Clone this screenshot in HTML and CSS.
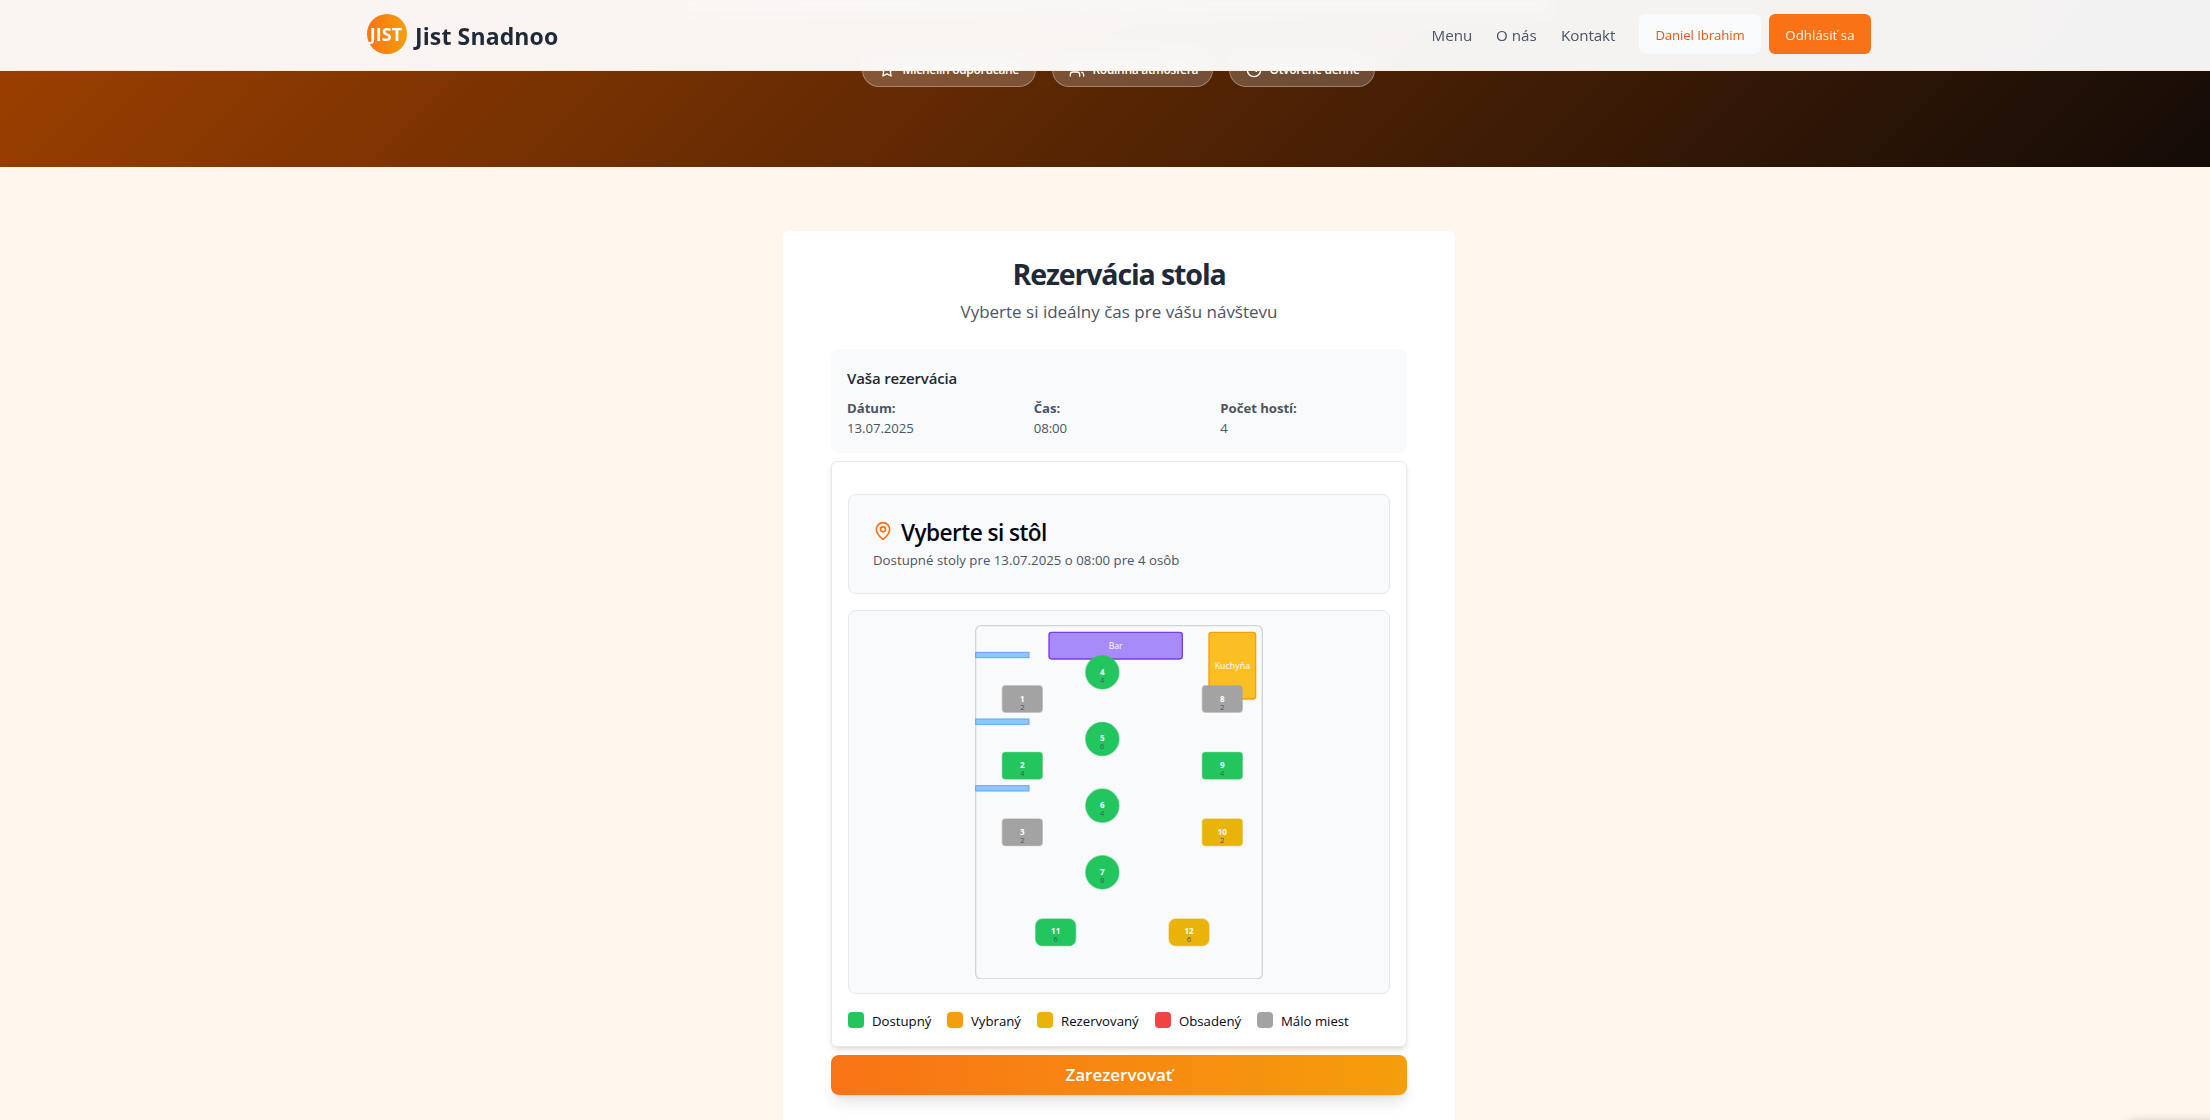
FILE: index.html
```html
<!DOCTYPE html>
<html lang="sk">
<head>
<meta charset="utf-8">
<title>Jist Snadnoo</title>
<link rel="stylesheet" href="styles.css">
</head>
<body>
<div class="page">
<header class="header">
  <div class="header-inner">
    <div class="brand"><span class="logo"><span>JIST</span></span><span class="brand-name">Jist Snadnoo</span></div>
    <nav class="nav">
      <a class="nav-menu">Menu</a><a class="nav-about">O nás</a><a class="nav-contact">Kontakt</a>
      <span class="btn btn-user">Daniel Ibrahim</span><span class="btn btn-logout">Odhlásiť sa</span>
    </nav>
  </div>
</header>
<section class="hero">
  <div class="hero-glow"></div>
  <div class="pills">
    <div class="pill pill-a"><svg class="ic" viewBox="0 0 24 24"><polygon points="12 2 15.09 8.26 22 9.27 17 14.14 18.18 21.02 12 17.77 5.82 21.02 7 14.14 2 9.27 8.91 8.26 12 2"/></svg><span>Michelin odporúčané</span></div>
    <div class="pill pill-b"><svg class="ic" viewBox="0 0 24 24"><path d="M16 21v-2a4 4 0 0 0-4-4H6a4 4 0 0 0-4 4v2"/><circle cx="9" cy="7" r="4"/><path d="M22 21v-2a4 4 0 0 0-3-3.87M16 3.13a4 4 0 0 1 0 7.75"/></svg><span>Rodinná atmosféra</span></div>
    <div class="pill pill-c"><svg class="ic" viewBox="0 0 24 24"><circle cx="12" cy="12" r="10"/><path d="M12 6v6l4 2"/></svg><span>Otvorené denne</span></div>
  </div>
</section>
<main class="main">
  <div class="card">
    <h2 class="title"><span>Rezervácia stola</span></h2>
    <p class="subtitle"><span>Vyberte si ideálny čas pre vášu návštevu</span></p>
    <section class="summary">
      <h3>Vaša rezervácia</h3>
      <div class="summary-grid">
        <div><b>Dátum:</b><span>13.07.2025</span></div>
        <div><b>Čas:</b><span>08:00</span></div>
        <div><b>Počet hostí:</b><span>4</span></div>
      </div>
    </section>
    <section class="panel">
      <div class="panel-head">
        <div class="panel-title"><svg class="pin" viewBox="0 0 24 24"><path d="M20 10c0 4.993-5.539 10.193-7.399 11.799a1 1 0 0 1-1.202 0C9.539 20.193 4 14.993 4 10a8 8 0 0 1 16 0"/><circle cx="12" cy="10" r="3"/></svg><h3>Vyberte si stôl</h3></div>
        <p>Dostupné stoly pre 13.07.2025 o 08:00 pre 4 osôb</p>
      </div>
      <div class="floor">
        <svg class="plan" viewBox="-1 -1 432 532">
          <rect class="room" width="430" height="530" rx="8"/>
          <rect class="wall" y="40" width="80" height="8"/>
          <rect class="wall" y="140" width="80" height="8"/>
          <rect class="wall" y="240" width="80" height="8"/>
          <rect class="bar" x="110" y="10" width="200" height="40" rx="4"/>
          <text class="zone" x="210" y="34.5">Bar</text>
          <rect class="kitchen" x="350" y="10" width="70" height="100" rx="4"/>
          <text class="zone" x="385" y="65" textLength="53">Kuchyňa</text>
          <g class="few"><rect x="40" y="90" width="60" height="40" rx="5"/><text x="70" y="114">1</text><text class="seats" x="70" y="126">2</text></g>
          <g class="free"><rect x="40" y="190" width="60" height="40" rx="5"/><text x="70" y="214">2</text><text class="seats" x="70" y="226">4</text></g>
          <g class="few"><rect x="40" y="290" width="60" height="40" rx="5"/><text x="70" y="314">3</text><text class="seats" x="70" y="326">2</text></g>
          <g class="free"><circle cx="190" cy="70" r="25"/><text x="190" y="74">4</text><text class="seats" x="190" y="86">4</text></g>
          <g class="free"><circle cx="190" cy="170" r="25"/><text x="190" y="173.500">5</text><text class="seats" x="190" y="185.500">6</text></g>
          <g class="free"><circle cx="190" cy="270" r="25"/><text x="190" y="274">6</text><text class="seats" x="190" y="286">4</text></g>
          <g class="free"><circle cx="190" cy="370" r="25"/><text x="190" y="374">7</text><text class="seats" x="190" y="386">8</text></g>
          <g class="few"><rect x="340" y="90" width="60" height="40" rx="5"/><text x="370" y="114">8</text><text class="seats" x="370" y="126">2</text></g>
          <g class="free"><rect x="340" y="190" width="60" height="40" rx="5"/><text x="370" y="214">9</text><text class="seats" x="370" y="226">4</text></g>
          <g class="booked"><rect x="340" y="290" width="60" height="40" rx="5"/><text x="370" y="314">10</text><text class="seats" x="370" y="326">2</text></g>
          <g class="free"><rect x="90" y="440" width="60" height="40" rx="10"/><text x="120" y="463">11</text><text class="seats" x="120" y="475">6</text></g>
          <g class="booked"><rect x="290" y="440" width="60" height="40" rx="10"/><text x="320" y="463">12</text><text class="seats" x="320" y="475">6</text></g>
        </svg>
      </div>
      <ul class="legend">
        <li class="l1"><i></i><span>Dostupný</span></li>
        <li class="l2"><i></i><span>Vybraný</span></li>
        <li class="l3"><i></i><span>Rezervovaný</span></li>
        <li class="l4"><i></i><span>Obsadený</span></li>
        <li class="l5"><i></i><span>Málo miest</span></li>
      </ul>
    </section>
    <button class="submit"><span>Zarezervovať</span></button>
  </div>
</main>
</div>
<div class="float-shadow"></div>
</body>
</html>
```
FILE: styles.css
```css
* { box-sizing: border-box; margin: 0; padding: 0; }
html, body { height: 1120px; overflow: hidden; }
body { font-family: "Open Sans", "Noto Sans", sans-serif; background: #fff6ed; color: #030712; }
.page { width: 2238px; height: 1120px; overflow: hidden; }

.header { position: fixed; top: 0; left: 0; z-index: 10; width: 2238px; height: 71px; background: rgba(255,255,255,.95); backdrop-filter: blur(8px); border-bottom: 1px solid #ffedd5; }
.header-inner { width: 1504px; height: 70px; margin: 0 auto; display: flex; justify-content: space-between; padding: 14px 0 16px; }
.brand { display: flex; gap: 8px; }
.logo { width: 40px; height: 40px; border-radius: 50%; background: linear-gradient(90deg, #f97316, #f59e0b); color: #fff; font-weight: 700; font-size: 18px; padding-right: 2px; display: flex; align-items: center; justify-content: center; }
.brand-name { font-size: 23px; font-weight: 700; line-height: 44px; color: #1f2937; letter-spacing: .12px; white-space: nowrap; }
.nav { display: flex; font-size: 15.2px; line-height: 43px; color: #4b5563; white-space: nowrap; }
.nav-menu { width: 64.500px; }
.nav-about { width: 65px; }
.nav-contact { width: 78px; letter-spacing: -.1px; }
.btn { height: 40px; border-radius: 6px; font-size: 13.2px; line-height: 42px; text-align: center; }
.btn-user { width: 122px; background: #f9fafb; color: #ea580c; letter-spacing: -.1px; }
.btn-logout { width: 102px; margin-left: 8px; background: #f97316; color: #fff7ed; letter-spacing: .08px; }

.hero { height: 167px; background: linear-gradient(135deg, #9e4000, #120b07); padding-top: 53px; position: relative; }
.hero-glow { position: absolute; left: 686px; top: 2px; width: 864px; height: 9px; background: rgba(255,255,255,.4); }
.pills { display: flex; justify-content: center; gap: 16px; padding-right: 2px; }
.pill { height: 34px; border: 1px solid rgba(255,255,255,.3); background: rgba(255,255,255,.2); border-radius: 17px; display: flex; align-items: center; gap: 8px; padding: 0 16px; font-size: 12px; font-weight: 600; letter-spacing: -.3px; line-height: 20px; color: #fff; white-space: nowrap; }
.pill-a { width: 174px; } .pill-b { width: 161px; } .pill-c { width: 146px; }
.ic { width: 16px; height: 16px; flex: none; fill: none; stroke: #fff; stroke-width: 2; stroke-linecap: round; stroke-linejoin: round; }

.main { padding-top: 64px; }
.card { width: 672px; height: 1000px; margin: 0 auto; padding: 24px 48px; background: #fff; border-radius: 6px; box-shadow: 0 1px 3px rgba(0,0,0,.03); }
.title { font-size: 28.6px; line-height: 38px; font-weight: 700; letter-spacing: -1.15px; color: #1f2937; text-align: center; }
.subtitle { margin-top: 5px; font-size: 17px; line-height: 28px; color: #4b5563; text-align: center; }
.summary { margin-top: 23px; height: 104px; padding: 17px 16px; border-radius: 8px; background: #f9fafb; color: #4b5563; font-size: 13.2px; line-height: 20px; }
.summary h3 { font-size: 15px; line-height: 24px; font-weight: 600; letter-spacing: -.15px; color: #1f2937; }
.summary-grid { display: grid; grid-template-columns: repeat(3, 1fr); gap: 16px; margin-top: 8px; letter-spacing: -.05px; }
.summary-grid b, .summary-grid span { display: table; }
.panel { margin-top: 8px; height: 586px; padding: 32px 16px 0; border: 1px solid #e5e7eb; border-radius: 6px; box-shadow: 0 4px 6px -1px rgba(0,0,0,.1), 0 2px 4px -2px rgba(0,0,0,.1); }
.panel-head { height: 100px; padding: 24px; border: 1px solid #e5e7eb; border-radius: 8px; background: #f9fafb; }
.panel-title { display: flex; gap: 8px; height: 31px; }
.pin { width: 20px; height: 20px; margin-top: 2px; fill: none; stroke: #f97316; stroke-width: 2; stroke-linecap: round; stroke-linejoin: round; }
.panel-title h3 { font-size: 22.6px; line-height: 28px; font-weight: 600; letter-spacing: -.55px; }
.panel-head p { width: max-content; font-size: 13.2px; line-height: 20px; color: #4b5563; letter-spacing: .035px; }
.floor { height: 384px; margin-top: 16px; padding-top: 13.5px; display: flex; justify-content: center; border: 1px solid #e5e7eb; border-radius: 8px; background: #f9fafb; }
.plan { width: 288px; height: 354.67px; }
.room { fill: #f9fafb; stroke: #d1d5db; stroke-width: 2; }
.wall { fill: #93c5fd; stroke: #60a5fa; stroke-width: 1.5; }
.bar { fill: #a78bfa; stroke: #7c3aed; stroke-width: 2; }
.kitchen { fill: #fbbf24; stroke: #f59e0b; stroke-width: 2; }
.plan text { font-size: 12px; font-weight: 700; fill: #fff; text-anchor: middle; }
.plan .zone { font-size: 13px; font-weight: 400; }
.plan .seats { font-size: 11.5px; font-weight: 400; fill: #4b5563; }
.free { fill: #22c55e; stroke: rgba(34,197,94,.5); }
.few { fill: #a3a3a3; stroke: rgba(163,163,163,.5); }
.booked { fill: #eab308; stroke: rgba(234,179,8,.5); }
.plan g { stroke-width: 2; }
.plan g text { stroke: none; }
.legend { display: flex; list-style: none; margin-top: 18px; font-size: 13.2px; line-height: 18px; white-space: nowrap; }
.legend li { display: flex; gap: 8px; }
.legend i { width: 16px; height: 16px; border-radius: 4px; flex: none; }
.l1 { width: 99px; } .l2 { width: 90px; } .l3 { width: 118px; } .l4 { width: 102px; }
.l1 i { background: #22c55e; } .l2 i { background: #f59e0b; } .l3 i { background: #eab308; } .l4 i { background: #ef4444; } .l5 i { background: #a3a3a3; }
.submit { display: block; width: 576px; height: 40px; margin-top: 8px; border: 0; border-radius: 8px; background: linear-gradient(90deg, #f97316, #f59e0b); color: #fff; font: 600 17px/40px "Open Sans", sans-serif; box-shadow: 0 10px 15px -3px rgba(0,0,0,.1), 0 4px 6px -4px rgba(0,0,0,.1); }
.float-shadow { position: fixed; left: 2126px; top: 1121px; width: 120px; height: 60px; border-radius: 8px; box-shadow: 0 0 10px rgba(0,0,0,.2); }
```
